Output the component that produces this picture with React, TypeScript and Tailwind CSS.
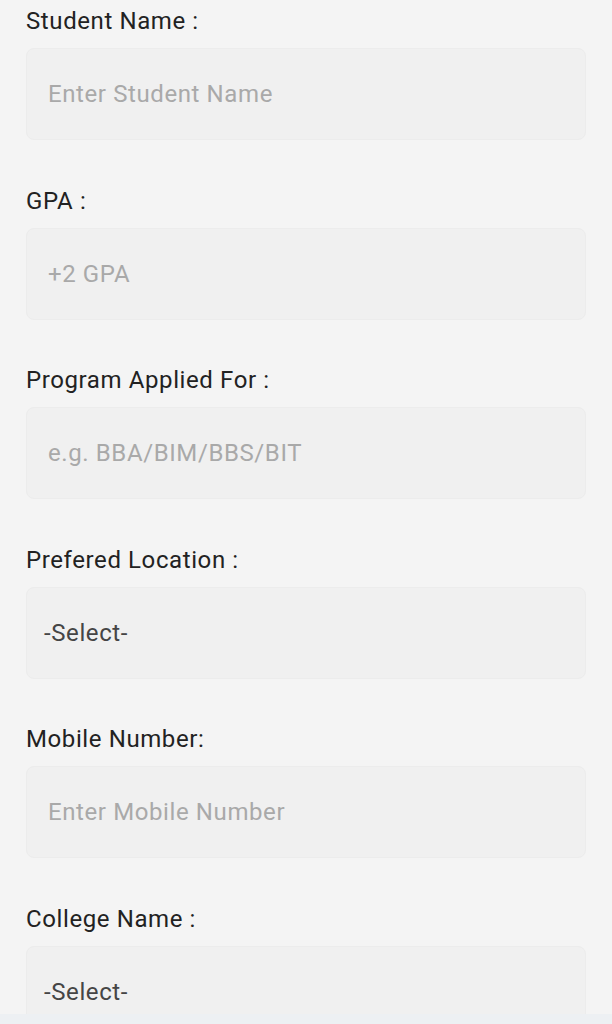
const fields = [
  { label: "Student Name :", placeholder: "Enter Student Name" },
  { label: "GPA :", placeholder: "+2 GPA" },
  { label: "Program Applied For :", placeholder: "e.g. BBA/BIM/BBS/BIT" },
  { label: "Prefered Location :", select: true },
  { label: "Mobile Number:", placeholder: "Enter Mobile Number" },
  { label: "College Name :", select: true },
];

export default function App() {
  return (
    <div className="relative h-screen overflow-hidden bg-[#f4f4f4] px-[26px] pt-[7px] font-['Roboto',sans-serif]">
      <form className="flex flex-col">
        {fields.map((f) => (
          <div key={f.label} className="mb-[46.5px] flex flex-col">
            <label className="mb-[13px] text-[24px] leading-[28px] tracking-[0.6px] text-[#222]">
              {f.label}
            </label>
            {f.select ? (
              <div className="flex h-[92px] items-center rounded-[8px] border border-[#ececec] bg-[#f0f0f0] pl-[17px] text-[24px] tracking-[0.6px] text-[#454545]">
                -Select-
              </div>
            ) : (
              <input
                className="h-[92px] w-full rounded-[8px] border border-[#ececec] bg-[#f0f0f0] pl-[21px] text-[24px] tracking-[0.6px] text-[#333] outline-none placeholder:text-[#a9a9a9]"
                placeholder={f.placeholder}
              />
            )}
          </div>
        ))}
      </form>
      {/* bottom bar */}
      <div className="fixed bottom-0 left-0 right-0 h-[10px] bg-[#edf0f3]" />
    </div>
  );
}
